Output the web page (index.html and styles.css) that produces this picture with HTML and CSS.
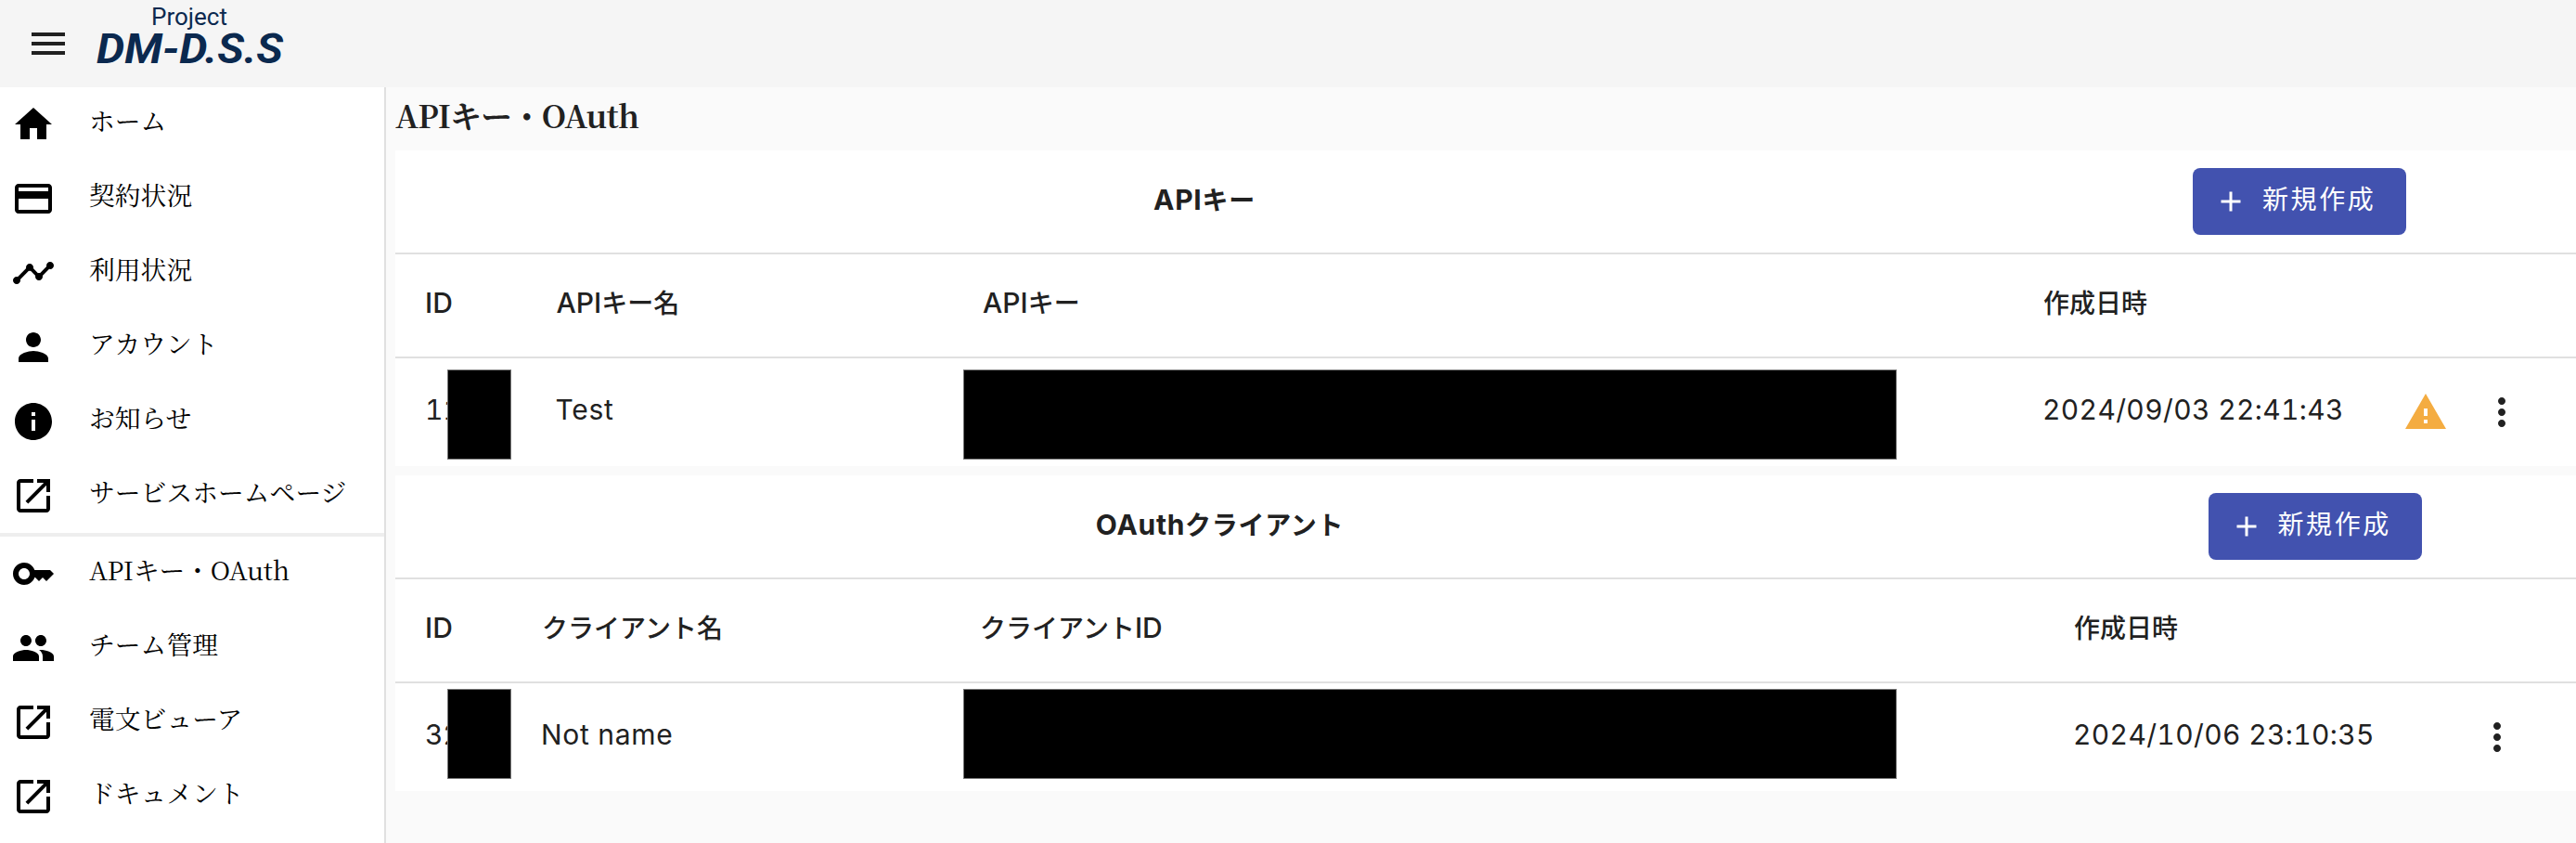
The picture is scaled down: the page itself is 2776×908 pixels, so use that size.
FILE: index.html
```html
<!DOCTYPE html>
<html lang="ja">
<head>
<meta charset="utf-8">
<title>APIキー・OAuth</title>
<link rel="stylesheet" href="styles.css">
</head>
<body>
<svg class="defs" width="0" height="0">
  <symbol id="open" viewBox="0 0 24 24"><path d="M19 19H5V5h7V3H5c-1.11 0-2 .9-2 2v14c0 1.1.89 2 2 2h14c1.1 0 2-.9 2-2v-7h-2v7zM14 3v2h3.59l-9.83 9.83 1.41 1.41L19 6.41V10h2V3h-7z"/></symbol>
  <symbol id="more" viewBox="0 0 24 24"><path d="M12 8c1.1 0 2-.9 2-2s-.9-2-2-2-2 .9-2 2 .9 2 2 2zm0 2c-1.1 0-2 .9-2 2s.9 2 2 2 2-.9 2-2-.9-2-2-2zm0 6c-1.1 0-2 .9-2 2s.9 2 2 2 2-.9 2-2-.9-2-2-2z"/></symbol>
  <symbol id="add" viewBox="0 0 24 24"><path d="M19 13h-6v6h-2v-6H5v-2h6V5h2v6h6v2z"/></symbol>
</svg>
<header class="topbar">
  <svg class="icon menu" viewBox="0 0 24 24"><path d="M3 18h18v-2H3v2zm0-5h18v-2H3v2zm0-7v2h18V6H3z"/></svg>
  <svg class="logo" width="210" height="94" viewBox="0 0 210 94">
    <text class="logo-small" x="61" y="27" textLength="82" lengthAdjust="spacingAndGlyphs">Project</text>
    <text class="logo-big" x="2" y="68" textLength="201" lengthAdjust="spacingAndGlyphs">DM-D.S.S</text>
  </svg>
</header>
<div class="body">
  <nav class="sidebar">
    <a class="item"><svg class="icon" viewBox="0 0 24 24"><path d="M10 20v-6h4v6h5v-8h3L12 3 2 12h3v8z"/></svg><span>ホーム</span></a>
    <a class="item"><svg class="icon" viewBox="0 0 24 24"><path d="M20 4H4c-1.11 0-1.99.89-1.99 2L2 18c0 1.11.89 2 2 2h16c1.11 0 2-.89 2-2V6c0-1.11-.89-2-2-2zm0 14H4v-6h16v6zm0-10H4V6h16v2z"/></svg><span>契約状況</span></a>
    <a class="item"><svg class="icon" viewBox="0 0 24 24"><path d="M23 8c0 1.1-.9 2-2 2-.18 0-.35-.02-.51-.07l-3.56 3.55c.05.16.07.34.07.52 0 1.1-.9 2-2 2s-2-.9-2-2c0-.18.02-.36.07-.52l-2.55-2.55c-.16.05-.34.07-.52.07s-.36-.02-.52-.07l-4.55 4.56c.05.16.07.33.07.51 0 1.1-.9 2-2 2s-2-.9-2-2 .9-2 2-2c.18 0 .35.02.51.07l4.56-4.55C8.02 9.36 8 9.18 8 9c0-1.1.9-2 2-2s2 .9 2 2c0 .18-.02.36-.07.52l2.55 2.55c.16-.05.34-.07.52-.07s.36.02.52.07l3.55-3.56C19.02 8.35 19 8.18 19 8c0-1.1.9-2 2-2s2 .9 2 2z"/></svg><span>利用状況</span></a>
    <a class="item"><svg class="icon" viewBox="0 0 24 24"><path d="M12 12c2.21 0 4-1.79 4-4s-1.79-4-4-4-4 1.79-4 4 1.79 4 4 4zm0 2c-2.67 0-8 1.34-8 4v2h16v-2c0-2.66-5.33-4-8-4z"/></svg><span>アカウント</span></a>
    <a class="item"><svg class="icon" viewBox="0 0 24 24"><path d="M12 2C6.48 2 2 6.48 2 12s4.48 10 10 10 10-4.48 10-10S17.52 2 12 2zm1 15h-2v-6h2v6zm0-8h-2V7h2v2z"/></svg><span>お知らせ</span></a>
    <a class="item"><svg class="icon"><use href="#open"/></svg><span>サービスホームページ</span></a>
    <div class="divider"></div>
    <a class="item api"><svg class="icon" viewBox="0 0 24 24"><path d="M21 10h-8.35C11.83 7.67 9.61 6 7 6c-3.31 0-6 2.69-6 6s2.69 6 6 6c2.61 0 4.83-1.67 5.65-4H13l2 2 2-2 2 2 4-4.04L21 10zM7 15c-1.65 0-3-1.35-3-3s1.35-3 3-3 3 1.35 3 3-1.35 3-3 3z"/></svg><span>APIキー・OAuth</span></a>
    <a class="item"><svg class="icon" viewBox="0 0 24 24"><path d="M16 11c1.66 0 2.99-1.34 2.99-3S17.66 5 16 5c-1.66 0-3 1.34-3 3s1.34 3 3 3zm-8 0c1.66 0 2.99-1.34 2.99-3S9.66 5 8 5C6.34 5 5 6.34 5 8s1.34 3 3 3zm0 2c-2.33 0-7 1.17-7 3.5V19h14v-2.5c0-2.33-4.67-3.5-7-3.5zm8 0c-.29 0-.62.02-.97.05 1.16.84 1.97 1.97 1.97 3.45V19h6v-2.5c0-2.33-4.67-3.5-7-3.5z"/></svg><span>チーム管理</span></a>
    <a class="item"><svg class="icon"><use href="#open"/></svg><span>電文ビューア</span></a>
    <a class="item"><svg class="icon"><use href="#open"/></svg><span>ドキュメント</span></a>
  </nav>
  <main class="main">
    <h1 class="title">APIキー・OAuth</h1>
    <section class="card keys">
      <div class="row head">
        <div class="caption"><span class="latin">API</span>キー</div>
        <div class="create"><button class="btn"><svg class="plus"><use href="#add"/></svg><span>新規作成</span></button></div>
      </div>
      <div class="row cols">
        <div><span class="latin">ID</span></div><div><span class="latin">API</span>キー名</div><div><span class="latin">API</span>キー</div><div>作成日時</div><div></div>
      </div>
      <div class="row data">
        <div class="masked">11<i class="mask mask-id"></i></div><div>Test</div><div class="masked"><i class="mask mask-key"></i></div><div class="date">2024/09/03 22:41:43</div>
        <div class="actions"><svg class="icon warn" viewBox="0 0 24 24"><path d="M1 21h22L12 2 1 21zm12-3h-2v-2h2v2zm0-4h-2v-4h2v4z"/></svg><svg class="icon"><use href="#more"/></svg></div>
      </div>
    </section>
    <section class="card clients">
      <div class="row head">
        <div class="caption"><span class="latin">OAuth</span>クライアント</div>
        <div class="create"><button class="btn"><svg class="plus"><use href="#add"/></svg><span>新規作成</span></button></div>
      </div>
      <div class="row cols">
        <div><span class="latin">ID</span></div><div>クライアント名</div><div>クライアント<span class="latin">ID</span></div><div>作成日時</div><div></div>
      </div>
      <div class="row data">
        <div class="masked">32<i class="mask mask-id"></i></div><div>Not name</div><div class="masked"><i class="mask mask-key"></i></div><div class="date">2024/10/06 23:10:35</div>
        <div class="actions"><svg class="icon"><use href="#more"/></svg></div>
      </div>
    </section>
  </main>
</div>
</body>
</html>
```
FILE: styles.css
```css
* { box-sizing: border-box; }
body {
  margin: 0;
  height: 908px;
  overflow: hidden;
  background: #fafafa;
  color: #212121;
  font-family: "Noto Sans CJK JP", sans-serif;
  font-size: 28px;
}
.defs { position: absolute; }
.icon { width: 48px; height: 48px; flex: none; fill: currentColor; }

.topbar { display: flex; align-items: center; height: 94px; padding-left: 28px; background: #f5f5f5; }
.logo { margin-left: 26px; fill: #0b294f; font-family: Roboto, sans-serif; }
.logo-small { font-size: 26px; }
.logo-big { font-size: 43.5px; font-weight: 700; font-style: italic; }

.body { display: flex; height: 814px; }
.sidebar {
  width: 416px;
  flex: none;
  background: #fff;
  border-right: 2px solid #e0e0e0;
  color: #000;
  font-family: "Noto Serif CJK JP", "Liberation Serif", "Noto Sans CJK JP", serif;
  font-size: 27.8px;
}
.item { display: flex; align-items: center; gap: 36px; height: 80px; padding-left: 12px; white-space: nowrap; }
.item span { padding-bottom: 10px; line-height: 40px; }
.api { letter-spacing: -0.2px; }
.divider { height: 4px; background: #eee; }

.main { width: 2360px; flex: none; padding-left: 10px; }
.title {
  margin: 0;
  height: 68px;
  line-height: 59px;
  font-family: "Noto Serif CJK JP", "Liberation Serif", "Noto Sans CJK JP", serif;
  font-size: 33.5px;
  font-weight: 700;
  letter-spacing: -0.65px;
}
.card { width: 2360px; height: 340px; margin-bottom: 10px; background: #fff; }
.row { display: grid; align-items: center; white-space: nowrap; }
.keys .row { grid-template-columns: 141.5px 459.5px 1143px 386px 1fr; }
.clients .row { grid-template-columns: 126px 472px 1179px 398px 1fr; }
.head, .cols { height: 112px; border-bottom: 2px solid #e0e0e0; }
.caption { grid-column: 1 / 4; padding-bottom: 7px; text-align: center; font-weight: 700; letter-spacing: 0.7px; }
.create { grid-column: 4 / 6; display: flex; justify-content: center; }
.btn {
  display: flex;
  align-items: center;
  width: 230px;
  height: 72px;
  padding: 0 0 0 23px;
  border: 0;
  border-radius: 8px;
  background: #4252af;
  color: #fff;
  font: 400 28px "Noto Sans CJK JP", sans-serif;
  letter-spacing: 2.6px;
}
.plus { width: 36px; height: 36px; margin-right: 16px; fill: currentColor; }
.btn span { padding-bottom: 8px; }
.cols { font-weight: 500; }
.cols > div, .data > div { padding: 0 0 7px 32px; }
.cols > div { padding-bottom: 9px; }
.latin { font-family: Inter, sans-serif; font-size: 30px; }
.data {
  height: 116px;
  font-family: Inter, "Noto Sans CJK JP", sans-serif;
  font-size: 30px;
  letter-spacing: 0.7px;
  font-variant-numeric: tabular-nums;
}
.data > div:nth-child(2) { padding-left: 31px; }
.data .date { padding-left: 31px; letter-spacing: 0.35px; }
.data .actions { display: flex; gap: 34px; padding: 0 0 0 34px; }
.clients .actions { padding-left: 66px; }
.warn { color: #f4ac41; }

.masked { position: relative; align-self: stretch; display: flex; align-items: center; letter-spacing: -0.3px; }
.mask { position: absolute; top: 12px; height: 97px; background: #000; border: 1px solid #777; }
.clients .mask { top: 6px; }
.mask-id { left: 56px; width: 69px; }
.mask-key { left: 11px; width: 1006px; }
.clients .mask-key { left: 14px; }
```
